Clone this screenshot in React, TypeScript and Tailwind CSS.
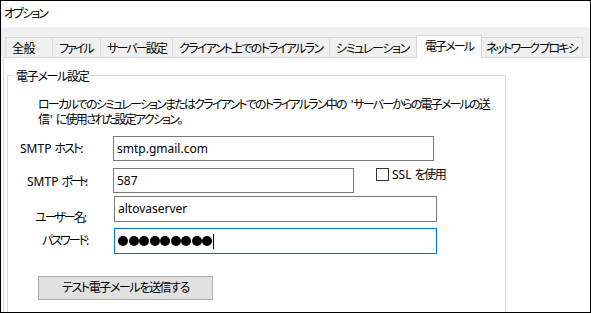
import React from "react";

const tabs = [
  { label: "全般", w: "w-[47px]", tr: "tracking-[-0.5px]" },
  { label: "ファイル", w: "w-[48px]", tr: "tracking-[-2px]" },
  { label: "サーバー設定", w: "w-[72px]", tr: "tracking-[-1.85px]" },
  { label: "クライアント上でのトライアルラン", w: "w-[157px]", tr: "tracking-[-1.7px]" },
  { label: "シミュレーション", w: "w-[89px]", tr: "tracking-[-1.35px]" },
];

export default function App() {
  return (
    <div className="w-[591px] h-[313px] border border-black bg-white overflow-hidden flex flex-col text-[12px] text-black font-['Noto_Sans','Noto_Sans_CJK_JP',sans-serif] [font-feature-settings:'palt']">
      {/* Title */}
      <div className="h-[26px] shrink-0 flex items-center pl-[3px]">
        <span className="tracking-[-2px]">オプション</span>
      </div>

      {/* Tab strip */}
      <div className="h-[30px] shrink-0 bg-[#f0f0f0] flex items-end pl-[4px]">
        {tabs.map((t) => (
          <div
            key={t.label}
            className={`${t.w} h-[20px] shrink-0 border-t border-l border-[#d9d9d9] flex items-center pl-[6px] pt-[3px] whitespace-nowrap overflow-hidden`}
          >
            <span className={t.tr}>{t.label}</span>
          </div>
        ))}
        <div className="w-[66px] h-[23px] shrink-0 -mx-[2px] -mb-px relative z-10 bg-white border-t border-l border-r border-[#d9d9d9] flex items-center pl-[8px] whitespace-nowrap">
          <span className="tracking-[-1.9px]">電子メール</span>
        </div>
        <div className="w-[103px] h-[20px] shrink-0 border-t border-l border-r border-[#d9d9d9] flex items-center pl-[5px] pt-[3px] whitespace-nowrap overflow-hidden">
          <span className="tracking-[-1.9px]">ネットワーク プロキシ</span>
        </div>
      </div>

      {/* Panel */}
      <div className="flex-1 ml-[2px] border-t border-l border-[#d9d9d9] bg-white">
        <div className="ml-[3px] mt-[17px] w-[499px] h-[300px] border border-[#dcdcdc] relative">
          <div className="absolute left-[6px] -top-[7px] bg-white px-[2px] leading-[16px]">
            <span className="tracking-[-1.3px]">電子メール設定</span>
          </div>

          <div className="mt-[21px] pl-[30px] flex flex-col whitespace-nowrap">
            <div className="h-[15px] flex items-center leading-[15px]">
              <span className="tracking-[-1.8px]">ローカルでのシミュレーションまたはクライアントでのトライアルラン中の</span>
              <span className="ml-[5px]">'</span>
              <span className="tracking-[-1.8px]">サーバーからの電子メールの送</span>
            </div>
            <div className="h-[15px] flex items-center leading-[15px]">
              <span className="tracking-[-1.8px]">信</span>
              <span className="ml-[1.8px]">'</span>
              <span className="ml-[3px] tracking-[-1.8px]">に使用された設定アクション。</span>
            </div>
          </div>

          {/* Host */}
          <div className="mt-[9px] h-[25px] flex items-center">
            <div className="w-[105px] pl-[12px] whitespace-nowrap">
              SMTP <span className="tracking-[-2px]">ホスト</span>:
            </div>
            <div className="w-[321px] h-[25px] border border-[#7a7a7a] pl-[3px] flex items-center">smtp.gmail.com</div>
          </div>

          {/* Port */}
          <div className="mt-[7px] h-[25px] flex items-center">
            <div className="w-[105px] pl-[19px] pt-[2px] whitespace-nowrap">
              SMTP <span className="tracking-[-3.1px]">ポート</span>:
            </div>
            <div className="w-[241px] h-[25px] border border-[#7a7a7a] pl-[3px] flex items-center">587</div>
            <div className="self-start ml-[22px] flex items-start">
              <div className="w-[13px] h-[13px] border border-[#333333] bg-white" />
              <div className="ml-[3px] leading-[14px] whitespace-nowrap">
                SSL <span className="tracking-[-1.5px]">を使用</span>
              </div>
            </div>
          </div>

          {/* User */}
          <div className="mt-[3px] h-[26px] flex items-start">
            <div className="w-[106px] pl-[27px] mt-[13px] whitespace-nowrap">
              <span className="tracking-[-2px]">ユーザー名</span>:
            </div>
            <div className="w-[323px] h-[26px] border border-[#7a7a7a] pl-[3px] flex items-center">altovaserver</div>
          </div>

          {/* Password */}
          <div className="mt-[6px] h-[26px] flex items-center">
            <div className="w-[106px] pl-[34px] whitespace-nowrap">
              <span className="tracking-[-2px]">パスワード</span>:
            </div>
            <div className="w-[323px] h-[26px] border border-[#0078d7] pl-[3px] flex items-center">
              <div className="flex items-center gap-[0.5px]">
                {Array.from({ length: 9 }).map((_, i) => (
                  <span key={i} className="w-[10px] h-[10px] rounded-full bg-black" />
                ))}
              </div>
              <span className="ml-[1px] w-px h-[15px] bg-black" />
            </div>
          </div>

          {/* Button */}
          <div className="mt-[22px] ml-[30px] w-[175px] h-[24px] bg-[#e1e1e1] border border-[#adadad] flex items-center justify-center whitespace-nowrap">
            <span className="tracking-[-1.4px]">テスト電子メールを送信する</span>
          </div>
        </div>
      </div>
    </div>
  );
}
